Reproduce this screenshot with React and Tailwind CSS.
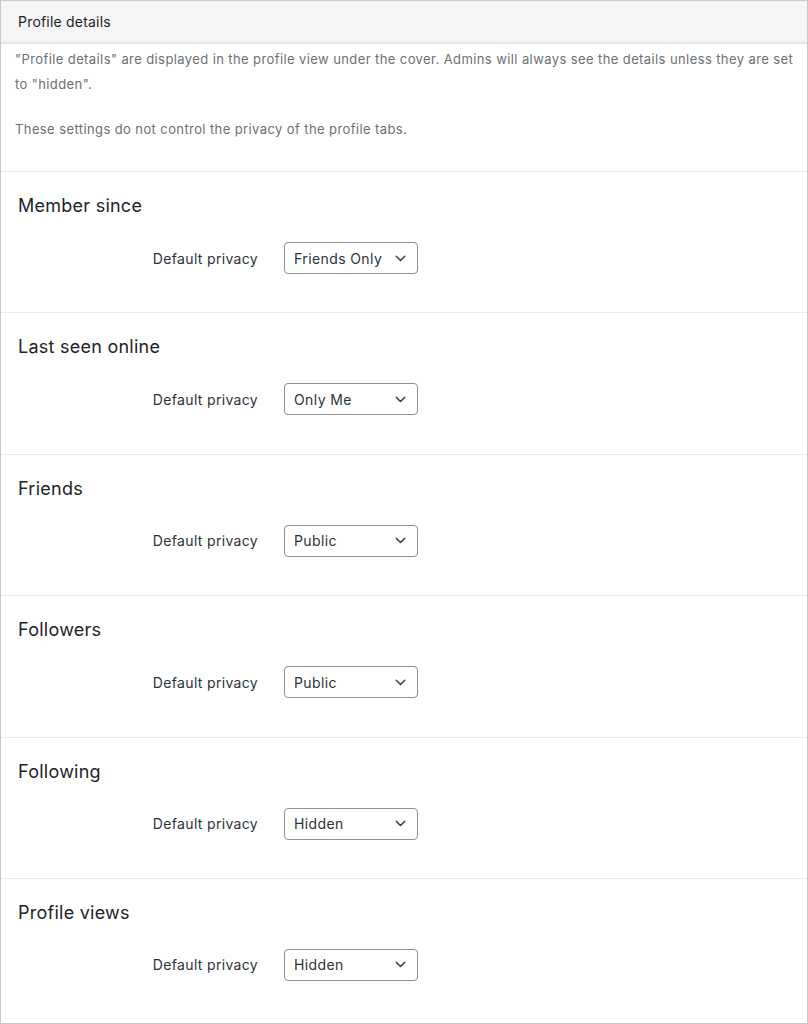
const items = [
  { id: 1, title: 'Member since', value: 'Friends Only' },
  { id: 2, title: 'Last seen online', value: 'Only Me' },
  { id: 3, title: 'Friends', value: 'Public' },
  { id: 4, title: 'Followers', value: 'Public' },
  { id: 5, title: 'Following', value: 'Hidden' },
  { id: 6, title: 'Profile views', value: 'Hidden' },
]

const Chevron = () => (
  <svg width="11" height="7" viewBox="0 0 11 7" fill="none">
    <path d="M1.25 1.25L5.5 5.5l4.25-4.25" stroke="#3c434a" strokeWidth="1.6" strokeLinecap="round" strokeLinejoin="round" />
  </svg>
)

const App = () => {
  return (
    <div className="w-[808px] h-[1024px] bg-white border border-[#c8c9cc] font-['Inter',sans-serif] flex flex-col overflow-hidden">
      {/* Header */}
      <div className="h-[43px] shrink-0 bg-[#f5f5f5] border-b-2 border-[#e6e6e6] pl-[17px] flex items-center">
        <h3 className="text-[14px] tracking-[0.2px] text-[#1d2327]">Profile details</h3>
      </div>

      {/* Description */}
      <div className="pl-[14px] pr-[4px] pt-[3px] pb-[29px] border-b border-[#ebebeb] text-[13px] tracking-[0.4px] leading-[25px] text-[#6c7075]">
        <p>"Profile details" are displayed in the profile view under the cover. Admins will always see the details unless they are set to "hidden".</p>
        <p className="mt-[20px]">These settings do not control the privacy of the profile tabs.</p>
      </div>

      {/* Sections */}
      {items.map((item, i) => (
        <div
          key={item.id}
          className={`h-[141.4px] shrink-0 pl-[17px] pt-[22px] ${i < items.length - 1 ? 'border-b border-[#ebebeb]' : ''}`}
        >
          <h2 className="text-[18px] tracking-[0.25px] leading-[24px] text-[#1d2327]">{item.title}</h2>
          <div className="flex items-center mt-[24px]">
            <div className="w-[240px] text-right text-[14px] tracking-[0.33px] text-[#2c3338]">Default privacy</div>
            <div className="ml-[26px] w-[134px] h-[32px] border border-[#8c8f94] rounded-[4px] pl-[9px] pr-[11px] flex items-center justify-between text-[14px] tracking-[0.4px] text-[#2c3338]">
              <span>{item.value}</span>
              <Chevron />
            </div>
          </div>
        </div>
      ))}
    </div>
  )
}

export default App
